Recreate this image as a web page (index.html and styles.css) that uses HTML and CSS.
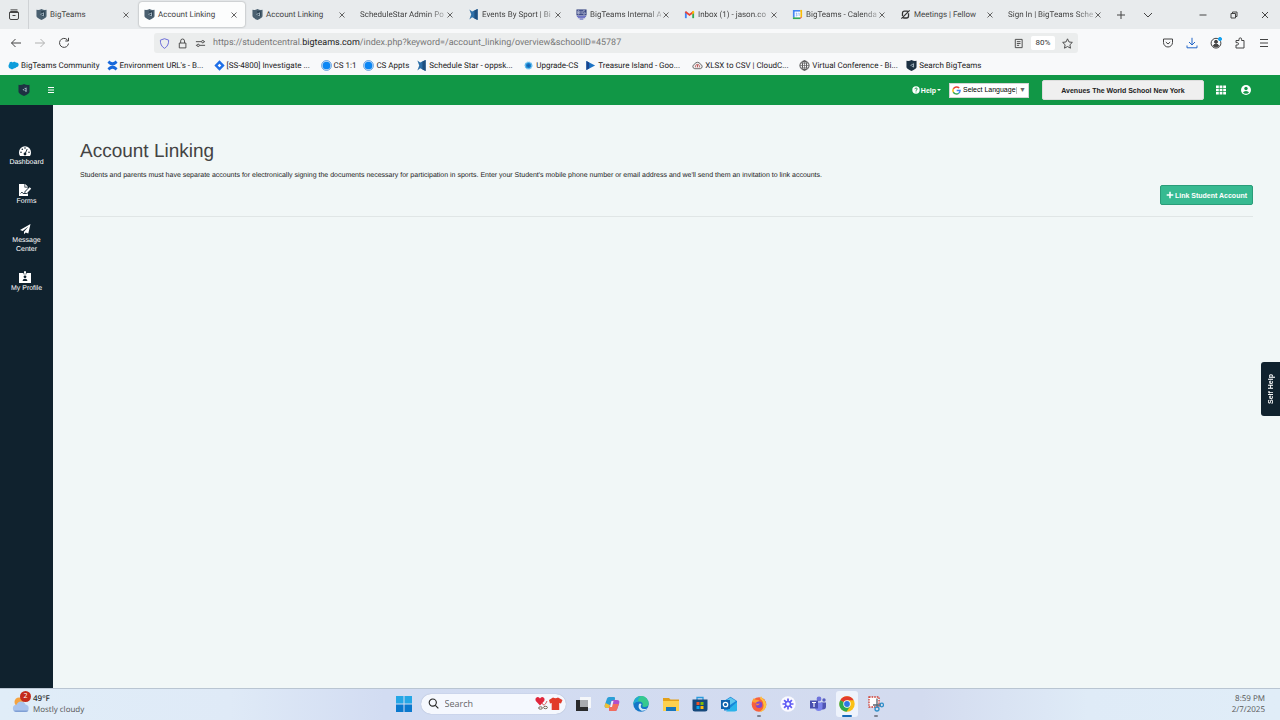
FILE: index.html
```html
<!DOCTYPE html>
<html lang="en">

<head>
    <meta charset="UTF-8">
    <meta name="viewport" content="width=device-width, initial-scale=1.0">
    <title>Account Linking</title>
    <link rel="stylesheet" href="styles.css">
</head>

<body>
    <!-- Shared icons -->
    <svg class="sprite" aria-hidden="true">
        <symbol id="shield" viewBox="0 0 12 12">
            <path d="M.5.8Q3.500 1.400 6 0q2.500 1.400 5.500.8V8Q11 10 6 12 1 10 .5 8z" class="shield-fill" />
            <path d="M5.500 2.500h4v5l-2 1.500z" fill="#263c4c" />
            <path d="M8.500 3.500 4.500 5.800l4 2.300z" fill="#b9cad5" />
            <circle cx="6.800" cy="5.800" r="1" fill="#2b4253" />
        </symbol>
        <symbol id="close" viewBox="0 0 8 8">
            <path d="M1.500 1.500l5 5m0-5l-5 5" fill="none" stroke="#555" stroke-width=".9" />
        </symbol>
        <symbol id="star-x" viewBox="0 0 12 12">
            <path d="M1.500.5 4.500 2.800 10.500 0v12L4.500 9 1.500 11.500 3.500 6z" fill="#2d6fa8" />
            <path d="M7 1.600 10.500 0v12L7 10.300z" fill="#1d4f80" />
        </symbol>
        <symbol id="dot" viewBox="0 0 12 12">
            <circle cx="6" cy="6" r="5.400" fill="#cfe6fb" stroke="#3b87d6" stroke-width=".8" />
            <circle cx="6" cy="6" r="4.200" fill="#0b86f4" />
        </symbol>
    </svg>

    <!-- Tabs -->
    <div class="tabs">
        <button class="tab-view" aria-label="Firefox View">
            <svg viewBox="0 0 12 12" class="line"><path d="M2.500.9h7M1.500 3.500h9v5.500q0 1.500-1.500 1.500H3Q1.500 10.500 1.500 9zM1.500 3.500l.8-1h7.400l.8 1M4.500 6.500h3" /></svg>
        </button>
        <div class="tab">
            <svg class="icon"><use href="#shield" /></svg>
            <span class="tab-title">BigTeams</span>
            <button class="tab-close" aria-label="Close tab"><svg><use href="#close" /></svg></button>
        </div>
        <div class="tab active">
            <svg class="icon"><use href="#shield" /></svg>
            <span class="tab-title">Account Linking</span>
            <button class="tab-close" aria-label="Close tab"><svg><use href="#close" /></svg></button>
        </div>
        <div class="tab">
            <svg class="icon"><use href="#shield" /></svg>
            <span class="tab-title">Account Linking</span>
            <button class="tab-close" aria-label="Close tab"><svg><use href="#close" /></svg></button>
        </div>
        <div class="tab">
            <span class="tab-title fade">ScheduleStar Admin Po</span>
            <button class="tab-close" aria-label="Close tab"><svg><use href="#close" /></svg></button>
        </div>
        <div class="tab">
            <svg class="icon"><use href="#star-x" /></svg>
            <span class="tab-title fade">Events By Sport | Bi</span>
            <button class="tab-close" aria-label="Close tab"><svg><use href="#close" /></svg></button>
        </div>
        <div class="tab">
            <svg class="icon" viewBox="0 0 12 12">
                <path d="M.5.5h11v6.500H.5z" fill="#33407f" />
                <path d="M2 2v3.500h1.500V4H2m1.500 0V2H2m3.500-.2v3.900M10 2H7.500v3.500H10V4H9" fill="none" stroke="#e8eaf6" stroke-width=".7" />
                <path d="M1 8h10M2 9.500h8M4 11h4" stroke="#4a51b8" stroke-width="1" />
            </svg>
            <span class="tab-title fade">BigTeams Internal A</span>
            <button class="tab-close" aria-label="Close tab"><svg><use href="#close" /></svg></button>
        </div>
        <div class="tab">
            <svg class="icon" viewBox="0 0 12 12">
                <path d="M2 10V3" stroke="#4285f4" stroke-width="2" />
                <path d="M10 10V3" stroke="#34a853" stroke-width="2" />
                <path d="M1.500 3 6 6.500 10.500 3" fill="none" stroke="#ea4335" stroke-width="2" />
                <path d="M9 4.100V2.500L11 2v2.500L9 6z" fill="#fbbc04" />
            </svg>
            <span class="tab-title fade">Inbox (1) - jason.co</span>
            <button class="tab-close" aria-label="Close tab"><svg><use href="#close" /></svg></button>
        </div>
        <div class="tab">
            <svg class="icon" viewBox="0 0 12 12">
                <path d="M1 1h8v2H3v6H1z" fill="#4285f4" />
                <path d="M9 1h2v8H9z" fill="#fbbc04" />
                <path d="M1 9h8v2H1z" fill="#34a853" />
                <path d="M9 9h2l-2 2z" fill="#ea4335" />
                <path d="M3 3h6v6H3z" fill="#fff" />
                <path d="M4 4.500h1.500L4.800 5.800l.7.2v1.500H4M7 4.500h.8v3" fill="none" stroke="#4285f4" stroke-width=".6" />
            </svg>
            <span class="tab-title fade">BigTeams - Calenda</span>
            <button class="tab-close" aria-label="Close tab"><svg><use href="#close" /></svg></button>
        </div>
        <div class="tab">
            <svg class="icon" viewBox="0 0 12 12">
                <path d="M1.500 10.500 10.500 1.500M8.500 2.200H5Q2.700 2.200 2.700 4.500V7.500M3.500 9.800H7Q9.300 9.800 9.300 7.500V4.500" fill="none" stroke="#333" stroke-width="1.400" />
            </svg>
            <span class="tab-title">Meetings | Fellow</span>
            <button class="tab-close" aria-label="Close tab"><svg><use href="#close" /></svg></button>
        </div>
        <div class="tab">
            <span class="tab-title fade">Sign In | BigTeams Sche</span>
            <button class="tab-close" aria-label="Close tab"><svg><use href="#close" /></svg></button>
        </div>
        <button class="tab-tool" aria-label="New tab"><svg viewBox="0 0 10 10" class="line"><path d="M5 1v8M1 5h8" /></svg></button>
        <button class="tab-tool" aria-label="List all tabs"><svg viewBox="0 0 10 10" class="line"><path d="M1 3l4 4 4-4" /></svg></button>
        <div class="window-buttons">
            <button aria-label="Minimize"><svg viewBox="0 0 10 10" class="line"><path d="M1.500 5h7" /></svg></button>
            <button aria-label="Restore"><svg viewBox="0 0 10 10" class="line"><path d="M2 3.500h4.500V8H2zM3.500 3.500V2H8v4.500H6.500" /></svg></button>
            <button aria-label="Close"><svg viewBox="0 0 10 10" class="line"><path d="M2 2l6 6m0-6L2 8" /></svg></button>
        </div>
    </div>

    <!-- Address bar -->
    <div class="toolbar">
        <button class="tool" aria-label="Back"><svg viewBox="0 0 12 12" class="line"><path d="M11 6H1.500M5.500 2l-4 4 4 4" /></svg></button>
        <button class="tool dim" aria-label="Forward"><svg viewBox="0 0 12 12" class="line"><path d="M1 6h9.500M6.500 2l4 4-4 4" /></svg></button>
        <button class="tool" aria-label="Reload"><svg viewBox="0 0 12 12" class="line"><path d="M10.500 6.500a4.500 4.500 0 1 1-1.500-4l1.500 1.500M10.500.8V4H7.300" /></svg></button>
        <div class="address">
            <svg class="icon line violet" viewBox="0 0 12 12"><path d="M6 .8 10.500 2.300Q10.800 8.500 6 11.300 1.200 8.500 1.500 2.300z" /></svg>
            <svg class="icon line" viewBox="0 0 12 12"><path d="M2.500 5.500h7.200v5.300H2.500zM4 5.500V3.200a2.100 2.100 0 0 1 4.200 0v2.300" /></svg>
            <svg class="icon line" viewBox="0 0 12 12"><path d="M1 4h6M9.800 4h1M5 8h6M1 8h1" /><circle cx="8.500" cy="4" r="1.300" /><circle cx="3.500" cy="8" r="1.300" /></svg>
            <a class="url" href="#">https://studentcentral.<b>bigteams.com</b>/index.php?keyword=/account_linking/overview&amp;schoolID=45787</a>
            <svg class="icon line" viewBox="0 0 12 12"><path d="M2.500 1.500h7.500v9H2.500zM4.200 4h4M4.200 6h4M4.200 8h2.500" /></svg>
            <button class="zoom">80%</button>
            <svg class="icon line" viewBox="0 0 12 12"><path d="M6 .9l1.600 3.400 3.700.5-2.700 2.600.7 3.700L6 9.300l-3.300 1.800.7-3.700L.7 4.800l3.700-.5z" /></svg>
        </div>
        <button class="tool" aria-label="Pocket"><svg viewBox="0 0 12 12" class="line"><path d="M1.500 2h9v3.500a4.500 4.500 0 0 1-9 0zM3.800 5 6 7l2.200-2" /></svg></button>
        <button class="tool blue" aria-label="Downloads"><svg viewBox="0 0 12 12" class="line"><path d="M6 .8V8M3 5l3 3 3-3M1 8.500v2.300h10V8.500" /></svg></button>
        <button class="tool" aria-label="Account">
            <svg viewBox="0 0 12 12" class="line"><circle cx="6" cy="6.200" r="4.900" /><circle cx="6" cy="4.800" r="1.500" fill="#444" /><path d="M3 8.800Q3.500 7.300 6 7.300t3 1.500L6 10z" fill="#444" /><circle cx="10" cy="2" r="1.600" fill="#18a4f0" stroke="#18a4f0" /></svg>
        </button>
        <button class="tool" aria-label="Extensions"><svg viewBox="0 0 12 12" class="line"><path d="M2 11V8h1.300a1.200 1.200 0 0 0 0-2.400H2V3.500h3V2.200a1.300 1.300 0 0 1 2.600 0v1.300H10V11z" /></svg></button>
        <button class="tool" aria-label="Menu"><svg viewBox="0 0 12 12" class="line"><path d="M2 2.500h8M2 6h8M2 9.500h8" /></svg></button>
    </div>

    <!-- Bookmarks -->
    <nav class="bookmarks">
        <a href="#"><svg class="icon" viewBox="0 0 12 12"><path d="M3 9.500Q.5 9.500.5 6.800.5 5 1.300 4.300 1.300 2 3.500 2q1.200 0 1.700.6Q6 1.700 7.300 2 8 2 8.500 2.800q3-.3 3.200 2.500Q11.500 8 9 8 8 9.500 6.500 9 5 11 3 9.500z" fill="#0d9ddb" /></svg>BigTeams Community</a>
        <a href="#" class="long"><svg class="icon" viewBox="0 0 12 12"><path d="M.5 3 2.500.5Q6 4.500 9.500.5L11.500 3Q6 9 .5 3z" fill="#1868db" /><path d="M.5 9 2.500 11.500Q6 7.500 9.500 11.500L11.500 9Q6 3 .5 9z" fill="#1868db" /></svg>Environment URL's - B...</a>
        <a href="#" class="long"><svg class="icon" viewBox="0 0 12 12"><path d="M6 .4 11.600 6 6 11.600.4 6z" fill="#1f6fe8" /><path d="M6 4l2 2-2 2-2-2z" fill="#fff" /></svg>[SS-4800] Investigate ...</a>
        <a href="#"><svg class="icon"><use href="#dot" /></svg>CS 1:1</a>
        <a href="#"><svg class="icon"><use href="#dot" /></svg>CS Appts</a>
        <a href="#" class="long"><svg class="icon"><use href="#star-x" /></svg>Schedule Star - oppsk...</a>
        <a href="#"><svg class="icon" viewBox="0 0 12 12"><circle cx="6" cy="6" r="3.600" fill="#1583cf" stroke="#6fc3f2" stroke-width="1.600" stroke-dasharray="1.500 .6" /><circle cx="6" cy="6" r="1.500" fill="#1b5fae" /></svg>Upgrade-CS</a>
        <a href="#" class="long"><svg class="icon" viewBox="0 0 12 12"><path d="M1.500 1 11 6l-9.500 5z" fill="#1c72c4" /><path d="M1.500 1 4.500 2.600v6.800l-3 1.600z" fill="#17458f" /></svg>Treasure Island - Goo...</a>
        <a href="#" class="long"><svg class="icon" viewBox="0 0 12 12"><path d="M3 9.500a2.400 2.400 0 0 1-.3-4.700 3.500 3.500 0 0 1 6.600 0A2.400 2.400 0 0 1 9 9.500z" fill="#eee" stroke="#555" stroke-width=".9" /><path d="M4 8a2.200 2.200 0 1 1 4 0M6 8V5.500" fill="none" stroke="#b84c4c" stroke-width="1" /></svg>XLSX to CSV | CloudC...</a>
        <a href="#" class="long"><svg class="icon line" viewBox="0 0 12 12"><circle cx="6" cy="6" r="5" /><ellipse cx="6" cy="6" rx="2.300" ry="5" /><path d="M1 6h10M6 1v10M1.800 3.500h8.400M1.800 8.500h8.400" stroke-width=".6" /></svg>Virtual Conference - Bi...</a>
        <a href="#"><svg class="icon dark"><use href="#shield" /></svg>Search BigTeams</a>
    </nav>

    <!-- App header -->
    <header class="header">
        <a href="#" class="brand dark" aria-label="BigTeams"><svg><use href="#shield" /></svg></a>
        <button class="menu-toggle" aria-label="Toggle menu"><svg viewBox="0 0 8 8"><path d="M1 1.500h6M1 4h6M1 6.500h6" stroke="#fff" stroke-width="1.200" /></svg></button>
        <button class="help">
            <svg viewBox="0 0 8 8"><circle cx="4" cy="4" r="3.700" fill="#fff" /><path d="M2.900 3.200q0-1.200 1.200-1.200t1.200 1Q5.300 3.700 4 4.300v.5M4 5.500v.9" fill="none" stroke="#119746" stroke-width=".9" /></svg>
            Help
            <i class="caret"></i>
        </button>
        <div class="language">
            <svg viewBox="0 0 10 10">
                <path d="M8 2.300A4 4 0 0 0 1.500 3.200" fill="none" stroke="#ea4335" stroke-width="1.600" />
                <path d="M1.500 3.200a4 4 0 0 0 0 3.600" fill="none" stroke="#fbbc04" stroke-width="1.600" />
                <path d="M1.500 6.800A4 4 0 0 0 7.500 8" fill="none" stroke="#34a853" stroke-width="1.600" />
                <path d="M7.500 8Q9 6.900 9 5H5.200" fill="none" stroke="#4285f4" stroke-width="1.600" />
            </svg>
            <select aria-label="Select Language">
                <option>Select Language</option>
            </select>
            <span class="language-arrow">▼</span>
        </div>
        <button class="school">Avenues The World School New York</button>
        <button class="header-icon" aria-label="Apps"><svg viewBox="0 0 12 12"><path d="M1 1.500h2.800v2.400H1zM4.600 1.500h2.800v2.400H4.600zM8.200 1.500H11v2.400H8.200zM1 4.800h2.800v2.400H1zM4.600 4.800h2.800v2.400H4.600zM8.200 4.800H11v2.400H8.200zM1 8.100h2.800v2.400H1zM4.600 8.100h2.800v2.400H4.600zM8.200 8.100H11v2.400H8.200z" fill="#fff" /></svg></button>
        <button class="header-icon" aria-label="User"><svg viewBox="0 0 12 12"><circle cx="6" cy="6" r="5" fill="#fff" /><circle cx="6" cy="4.500" r="1.700" fill="#119746" /><path d="M3 8.500Q3.500 7 6 7t3 1.500Q8 9.700 6 9.700T3 8.500z" fill="#119746" /></svg></button>
    </header>

    <div class="page">
        <nav class="sidebar">
            <a href="#">
                <svg viewBox="0 0 14 12"><path d="M2 11A6 6 0 0 1 1 7.200a6 6 0 0 1 12 0A6 6 0 0 1 12 11z" fill="#fff" /><g fill="#10222e"><circle cx="3" cy="7.300" r=".8" /><circle cx="4.300" cy="4.300" r=".8" /><circle cx="7" cy="3" r=".8" /><circle cx="11" cy="7.300" r=".8" /><circle cx="7" cy="9" r="1.400" /></g><path d="M7 9l2.200-5" stroke="#10222e" stroke-width=".9" /></svg>
                <span>Dashboard</span>
            </a>
            <a href="#">
                <svg viewBox="0 0 14 12"><path d="M1 0h5.500v3.500H10V4L6.500 7.500V10H9L10 9v3H1z" fill="#fff" /><path d="M7.200 0 10 2.800H7.200zM7.300 7.700 11.700 3.300l1.500 1.500-4.400 4.400H7.300z" fill="#fff" /><path d="M2.500 9.500 4 8l1 1.500h2.500" fill="none" stroke="#10222e" stroke-width=".8" /></svg>
                <span>Forms</span>
            </a>
            <a href="#">
                <svg viewBox="0 0 14 12"><path d="M12.500 1 2 7l2.700 1.100L10.500 3.500 6 8.700v2.500L7.700 9.400 10.300 10.500z" fill="#fff" /></svg>
                <span>Message Center</span>
            </a>
            <a href="#">
                <svg viewBox="0 0 14 12"><path d="M1 2h4.500v1.300h3V2H13v10H1zM6 .3h2v2.500H6z" fill="#fff" /><circle cx="7" cy="5.800" r="1.400" fill="#10222e" /><path d="M4.500 10Q4.800 7.800 7 7.800t2.500 2.200z" fill="#10222e" /></svg>
                <span>My Profile</span>
            </a>
        </nav>

        <main class="content">
            <h1>Account Linking</h1>
            <p>Students and parents must have separate accounts for electronically signing the documents necessary for participation in sports. Enter your Student's mobile phone number or email address and we'll send them an invitation to link accounts.</p>
            <div class="actions">
                <button class="link-account"><svg viewBox="0 0 8 8"><path d="M4 .7v6.600M.7 4h6.600" stroke="#fff" stroke-width="1.500" /></svg>Link Student Account</button>
            </div>
        </main>
        <button class="self-help">Self Help</button>
    </div>

    <!-- Taskbar -->
    <footer class="taskbar">
        <div class="weather">
            <div class="weather-icon">
                <svg viewBox="0 0 18 18"><circle cx="7" cy="7" r="4.500" fill="#f5a340" /><path d="M4.500 17a3.600 3.600 0 0 1 0-7.200 4.800 4.800 0 0 1 9-.3 3.800 3.800 0 0 1 0 7.500z" fill="#a9c3ec" /><path d="M2 15.500q1 1.500 2.500 1.500h9q2 0 3-1.500z" fill="#7f9fd4" /></svg>
                <span class="badge">2</span>
            </div>
            <div><b>49°F</b><br>Mostly cloudy</div>
        </div>
        <div class="dock">
            <button class="app" aria-label="Start"><svg viewBox="0 0 16 16"><path d="M0 0h7.500v7.500H0zM8.500 0H16v7.500H8.500z" fill="#25a7e6" /><path d="M0 8.500h7.500V16H0zM8.500 8.500H16V16H8.500z" fill="#0a79ce" /></svg></button>
            <label class="search">
                <svg class="glass" viewBox="0 0 12 12"><circle cx="5.200" cy="5" r="3.900" fill="none" stroke="#222" stroke-width="1.200" /><path d="M8 8l3.300 3.300" stroke="#222" stroke-width="1.200" /></svg>
                <input type="text" placeholder="Search" aria-label="Search">
                <svg class="doodle" viewBox="0 0 28 16"><path d="M5 9.500.8 5Q-.3 2 2 1.200 4 .6 5 2.600 6 .6 8 1.200 10.300 2 9.200 5z" fill="#e0263c" /><path d="M7 7q2 5 5-2" fill="none" stroke="#c33" stroke-width=".8" /><ellipse cx="5.500" cy="12" rx="1.900" ry="1.200" fill="none" stroke="#765" /><ellipse cx="10.500" cy="11.500" rx="1.900" ry="1.200" fill="none" stroke="#765" /><path d="M14 4l4-2.500q2.500 1.500 5 0L27.500 4 26 7.500l-1.800-.5v7h-7.500V7L15 7.500z" fill="#e23b2a" /></svg>
            </label>
            <div class="apps">
                <button class="app" aria-label="Task view"><svg viewBox="0 0 16 16"><path d="M5 1h11v11H5z" fill="#f5f7fa" /><path d="M1 4h4v7h8v4H1z" fill="#2a2a2c" /><path d="M5 4h8v7H5z" fill="#a9abb0" /></svg></button>
                <button class="app" aria-label="Copilot"><svg viewBox="0 0 16 16"><path d="M5 1h5q1.500 0 1 2L9 10q-.6 2-2.500 2H3Q0 12 .8 9L3 2.500Q3.500 1 5 1z" fill="#2b9fd6" /><path d="M1.500 7 .8 9Q0 12 3 12h3.500Q8 12 8.700 10.500z" fill="#f0bf36" /><path d="M11 15H6q-1.500 0-1-2l2-7q.6-2 2.500-2H13q3 0 2.200 3L13 13.500q-.5 1.500-2 1.500z" fill="#b34fc9" /><path d="M7 8h8l-2 5.500q-.5 1.500-2 1.500H6q-1.500 0-1-2z" fill="#f26d5c" /><path d="M7.500 5h2L8 11H6z" fill="#e7efff" /></svg></button>
                <button class="app" aria-label="Edge"><svg viewBox="0 0 16 16"><circle cx="8" cy="8" r="7.700" fill="#1476c8" /><path d="M.5 7A7.600 7.600 0 0 1 15.700 8q-.5 3-4 3-2.500 0-2.500-1 1-1.500 0-3.200Q8 5.500 5.500 5.500 2 5.500.5 8z" fill="#36c98f" /><path d="M.5 7A7.600 7.600 0 0 1 8 .3Q4 2.500 5.500 5.500 2 5.500.5 8z" fill="#22a8d8" /><path d="M6 8q-1.500 4 2 6.500 3 1.200 6.500-2-5 1.500-6.500-1-.8-1.500.5-3.500-1.500-1-2.500 0z" fill="#d7ebf7" /></svg></button>
                <button class="app" aria-label="File Explorer"><svg viewBox="0 0 16 16"><path d="M0 2h6l1.500 1.500H16V14H0z" fill="#e3a019" /><path d="M0 5h16v10H0z" fill="#fdd04f" /><path d="M3 11h10v4H3z" fill="#1877bd" /></svg></button>
                <button class="app" aria-label="Microsoft Store"><svg viewBox="0 0 16 16"><path d="M5 4V1.500h6V4" fill="none" stroke="#2a9bdd" stroke-width="1.300" /><path d="M.5 3.500h15V13q0 2.500-2.500 2.500H3Q.5 15.500.5 13z" fill="#16497c" /><path d="M4.500 6h3v3h-3z" fill="#f05325" /><path d="M8.500 6h3v3h-3z" fill="#81bc06" /><path d="M4.500 10h3v3h-3z" fill="#05a6f0" /><path d="M8.500 10h3v3h-3z" fill="#ffba08" /></svg></button>
                <button class="app" aria-label="Outlook"><svg viewBox="0 0 16 16"><path d="M3 5 9.500.8 16 5v9.500H3z" fill="#1685d8" /><path d="M4 5 9.500 1.500 15 5l-6 4z" fill="#5fc6ee" /><path d="M5 15.500 16 6v7q0 2.500-2.500 2.500z" fill="#29b3ea" /><path d="M0 4h9v9H0z" fill="#0f63ad" /><circle cx="4.500" cy="8.500" r="2.200" fill="none" stroke="#fff" stroke-width="1.300" /></svg></button>
                <button class="app open" aria-label="Firefox"><svg viewBox="0 0 16 16"><circle cx="8" cy="8.500" r="7.300" fill="#f8603c" /><path d="M10 0q1 2.500 3.500 4Q16.500 8 14.500 12 12 16 8 15.800q5-2 4.500-6.800Q12 4 9 3z" fill="#fdc23e" /><path d="M1 6q.5-2.500 2-4 .5 1.500 2 1.800 2-.3 3.500 1.200L6 7z" fill="#ffa12f" /><circle cx="8" cy="8.800" r="3.300" fill="#8147cc" /><path d="M5 7.500q2 .3 4 0-1 2-3.500 2z" fill="#ff8b36" /></svg></button>
                <button class="app" aria-label="Loom"><svg viewBox="0 0 16 16"><circle cx="8" cy="8" r="7.700" fill="#fafaff" /><path d="M8 2.500v11M2.500 8h11M4.100 4.100l7.800 7.800M11.900 4.100l-7.800 7.800" stroke="#625df5" stroke-width="1.700" /><circle cx="8" cy="8" r="3.200" fill="#625df5" /><circle cx="8" cy="8" r="1.700" fill="#fff" /></svg></button>
                <button class="app" aria-label="Teams"><svg viewBox="0 0 16 16"><circle cx="9" cy="3" r="2.400" fill="#6f74dc" /><circle cx="14" cy="4" r="1.700" fill="#565cc0" /><path d="M11 6.500h5v4q0 3-3 3h-2z" fill="#5055b3" /><path d="M5 6.500h7.500V11q0 4-3.800 4Q5 15 5 11z" fill="#7b83eb" /><path d="M0 4.500h8v8H0z" fill="#484fb0" /><path d="M2 6.500h4M4 6.500v4.500" stroke="#fff" stroke-width="1.100" /></svg></button>
                <button class="app current" aria-label="Chrome"><svg viewBox="0 0 16 16"><circle cx="8" cy="8" r="7.700" fill="#fbc116" /><path d="M8 8 1.300 4.200A7.700 7.700 0 0 1 14.700 4.200H8z" fill="#e33b2e" /><path d="M1.300 4.200A7.700 7.700 0 0 0 7.500 15.700L11.300 10 8 8z" fill="#2da94f" /><circle cx="8" cy="8" r="3.700" fill="#fff" /><circle cx="8" cy="8" r="2.900" fill="#2f77e5" /></svg></button>
                <button class="app open" aria-label="Snipping Tool"><svg viewBox="0 0 16 16"><path d="M1 1h10v10H1z" fill="#fff" stroke="#cf3d32" stroke-width="1.300" stroke-dasharray="1.600 1" /><path d="M9 2.500v8M5 9h8" stroke="#5b6470" stroke-width="1.300" /><circle cx="9" cy="13" r="2" fill="none" stroke="#2f8fc9" stroke-width="1.300" /><circle cx="13.700" cy="9" r="1.800" fill="none" stroke="#2f8fc9" stroke-width="1.300" /></svg></button>
            </div>
        </div>
        <div class="clock">8:59 PM<br>2/7/2025</div>
    </footer>
</body>

</html>
```

FILE: styles.css
```css
* {
    box-sizing: border-box;
}

body {
    display: flex;
    flex-direction: column;
    min-height: 100vh;
    margin: 0;
    background-color: #f1f7f7;
    font-family: "Liberation Sans", Arial, sans-serif;
    font-size: 7px;
    color: #333;
    text-rendering: geometricPrecision;
}

button {
    padding: 0;
    border: none;
    background: none;
    font: inherit;
    color: inherit;
    cursor: pointer;
}

a {
    color: inherit;
    text-decoration: none;
}

svg {
    display: block;
    flex: none;
}

.sprite {
    position: absolute;
    width: 0;
    height: 0;
}

.icon {
    width: 11px;
    height: 11px;
    color: #4a6070;
}

.dark {
    color: #1d3142;
}

.shield-fill {
    fill: currentColor;
}

.line {
    fill: none;
    stroke: #444;
    stroke-width: 1;
}

/* Browser tabs */
.tabs {
    display: flex;
    align-items: center;
    height: 29px;
    background-color: #e8ebed;
    font: 8px/12px Roboto, sans-serif;
    color: #444;
}

.tab-view {
    display: flex;
    justify-content: center;
    align-items: center;
    width: 29px;
    height: 29px;
    margin-right: 2px;
    border-right: 1px solid #cfd2d5;
}

.tab-view svg {
    width: 12px;
    height: 12px;
}

.tab {
    display: flex;
    flex: 0 1 106px;
    align-items: center;
    gap: 3px;
    min-width: 0;
    height: 25px;
    margin-right: 2px;
    padding: 0 7px 0 5px;
    border-radius: 3px;
}

.tab.active {
    background-color: #fcfdfd;
    box-shadow: 0 0 2px rgba(0, 0, 0, 0.4);
}

.tab-title {
    flex: 1;
    min-width: 0;
    white-space: nowrap;
}

.tab-title.fade {
    margin-right: -2px;
    mask-image: linear-gradient(to right, #000 80%, rgba(0, 0, 0, 0.3));
}

.tab-close svg {
    width: 8px;
    height: 8px;
}

.tab-tool {
    width: 10px;
    margin-left: 5px;
    margin-right: 12px;
}

.tab-tool svg,
.window-buttons svg {
    width: 10px;
    height: 10px;
}

.window-buttons {
    display: flex;
    gap: 21px;
    margin-left: auto;
    padding-right: 10px;
}

/* Address bar */
.toolbar {
    display: flex;
    align-items: center;
    gap: 12px;
    height: 28px;
    padding: 0 10px;
    background-color: #f8f9fa;
}

.tool svg {
    width: 12px;
    height: 12px;
}

.dim {
    opacity: 0.4;
}

.blue .line {
    stroke: #2266c8;
}

.violet {
    stroke: #6464d8;
}

.address {
    display: flex;
    flex: 1;
    align-items: center;
    gap: 7px;
    min-width: 0;
    height: 20px;
    margin: 0 72px;
    padding: 0 5px;
    border-radius: 3px;
    background-color: #ebeded;
}

.url {
    flex: 1;
    overflow: hidden;
    font: 9px/14px Roboto, sans-serif;
    color: #777;
    white-space: nowrap;
}

.url b {
    font-weight: normal;
    color: #222;
}

.zoom {
    width: 24px;
    height: 14px;
    border-radius: 2px;
    background-color: #fff;
    font: 8px/14px Roboto, sans-serif;
}

/* Bookmarks */
.bookmarks {
    display: flex;
    gap: 7px;
    height: 18px;
    padding: 0 8px;
    background-color: #f8f9fa;
    font: 8px/16px Roboto, sans-serif;
    color: #222;
    white-space: nowrap;
}

.bookmarks a {
    display: flex;
    align-items: center;
    gap: 2px;
    height: 17px;
}

.bookmarks .long {
    width: 100px;
}

/* App header */
.header {
    display: flex;
    align-items: center;
    height: 30px;
    padding-right: 28px;
    background-color: #119746;
}

.brand {
    margin-left: 18px;
}

.brand svg {
    width: 12px;
    height: 12px;
}

.menu-toggle {
    margin-left: 17px;
}

.menu-toggle svg {
    width: 8px;
    height: 8px;
}

.help {
    display: flex;
    align-items: center;
    gap: 1px;
    margin-left: auto;
    font-weight: bold;
    color: #fff;
}

.help svg {
    width: 8px;
    height: 8px;
}

.caret {
    border: 2px solid transparent;
    border-top-color: #fff;
    border-bottom: none;
}

.language {
    display: flex;
    align-items: center;
    width: 80px;
    height: 15px;
    margin-left: 8px;
    padding: 0 2px;
    border: 1px solid #d5d5d5;
    background-color: #fff;
}

.language svg {
    width: 9px;
    height: 9px;
}

.language select {
    flex: 1;
    min-width: 0;
    padding: 0 0 0 2px;
    border: none;
    background: none;
    font: 7px/12px "Liberation Sans", Arial, sans-serif;
    color: #000;
    appearance: none;
}

.language-arrow {
    padding-left: 2px;
    border-left: 1px solid #bbb;
    font-size: 7px;
    color: #666;
}

.school {
    width: 162px;
    height: 20px;
    margin-left: 13px;
    border: 1px solid #ddd;
    border-radius: 2px;
    background-color: #efefef;
    font-weight: bold;
    color: #222;
}

.header-icon {
    margin-left: 13px;
}

.school + .header-icon {
    margin-left: 11px;
}

.header-icon svg {
    width: 12px;
    height: 12px;
}

/* Page */
.page {
    position: relative;
    display: flex;
    flex: 1;
}

.sidebar {
    display: flex;
    flex-direction: column;
    flex: none;
    gap: 17px;
    width: 53px;
    padding: 40px 6px 0;
    background-color: #10222e;
    line-height: 9px;
    color: #fff;
    text-align: center;
}

.sidebar a {
    display: flex;
    flex-direction: column;
    align-items: center;
    gap: 1px;
}

.sidebar svg {
    width: 14px;
    height: 12px;
    margin-right: 3px;
}

.content {
    flex: 1;
    padding: 35px 27px;
}

.content h1 {
    margin: 0;
    font-size: 19px;
    font-weight: normal;
    line-height: 24px;
    color: #444;
}

.content p {
    margin: 7px 0 4px;
    line-height: 10px;
    color: #222;
}

.actions {
    display: flex;
    justify-content: flex-end;
    padding-bottom: 11px;
    border-bottom: 1px solid #e0e6e6;
}

.link-account {
    display: flex;
    justify-content: center;
    align-items: center;
    gap: 1px;
    width: 93px;
    height: 20px;
    border: 1px solid #2a9d79;
    border-radius: 2px;
    background-color: #37ba91;
    font-weight: bold;
    color: #fff;
}

.link-account svg {
    width: 8px;
    height: 8px;
}

.self-help {
    position: absolute;
    top: 257px;
    right: 0;
    width: 19px;
    height: 54px;
    border-radius: 0 3px 3px 0;
    background-color: #10222e;
    font-weight: bold;
    color: #fff;
    writing-mode: vertical-rl;
    transform: rotate(180deg);
}

/* Taskbar */
.taskbar {
    display: grid;
    grid-template-columns: 1fr auto 1fr;
    align-items: center;
    height: 32px;
    padding-bottom: 2px;
    border-top: 1px solid #b9c5d2;
    background: linear-gradient(to right, #e0edf8, #dfeaf7 18%, #d2dcf2 30%, #d3dbef 72%, #dfebf7 85%, #e0edf8);
    font: 8px/11px "Open Sans", sans-serif;
    color: #555;
}

.weather {
    display: flex;
    align-items: center;
    gap: 3px;
    padding-left: 12px;
}

.weather b {
    font-weight: 600;
    color: #333;
}

.weather-icon {
    position: relative;
}

.weather-icon svg {
    width: 18px;
    height: 18px;
}

.badge {
    position: absolute;
    top: -4px;
    right: -1px;
    width: 11px;
    height: 11px;
    border-radius: 50%;
    background-color: #c42b1c;
    font-size: 7px;
    color: #fff;
    text-align: center;
}

.dock {
    display: flex;
    align-items: center;
    gap: 6px;
}

.apps {
    display: flex;
    justify-content: space-between;
    width: 316px;
}

.app {
    position: relative;
    display: flex;
    justify-content: center;
    align-items: center;
    width: 22px;
    height: 26px;
    border-radius: 3px;
}

.app svg {
    width: 16px;
    height: 16px;
}

.app.current {
    background-color: #eef3fc;
}

.app.open::after,
.app.current::after {
    content: "";
    position: absolute;
    bottom: 0;
    width: 4px;
    height: 2px;
    border-radius: 1px;
    background-color: #7c8290;
}

.app.current::after {
    width: 10px;
    background-color: #1668b8;
}

.search {
    display: flex;
    align-items: center;
    width: 145px;
    height: 20px;
    padding: 0 3px 0 7px;
    border-radius: 10px;
    background-color: #f5f8fe;
    box-shadow: 0 0 1px #8c9ab8;
}

.search .glass {
    width: 11px;
    height: 11px;
}

.search input {
    flex: 1;
    min-width: 0;
    padding: 0 0 0 6px;
    border: none;
    background: none;
    font: 9px/14px "Open Sans", sans-serif;
}

.search input::placeholder {
    color: #666;
}

.search .doodle {
    width: 28px;
    height: 16px;
}

.clock {
    padding-right: 15px;
    text-align: right;
}
```
